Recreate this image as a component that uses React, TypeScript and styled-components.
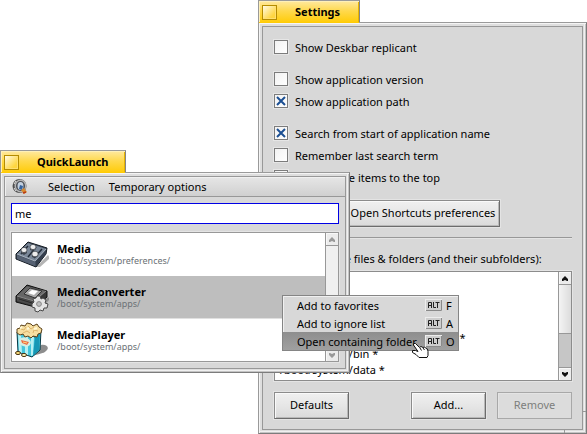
import React from "react";
import styled, { createGlobalStyle, css } from "styled-components";

const GlobalStyle = createGlobalStyle`
  * { box-sizing: border-box; }
  body { margin: 0; background: #fff; }
  body, button, input {
    font-family: "Noto Sans", "Open Sans", sans-serif;
    font-size: 11px;
    line-height: 16px;
    color: #000;
  }
  button { margin: 0; padding: 0; border: 0; background: none; }
`;

const Desktop = styled.main`
  position: relative;
  min-height: 100vh;
  overflow: hidden;
`;

/* ---------- windows ---------- */

const SettingsPlace = styled.div`
  position: absolute;
  top: 0;
  left: 258px;
  right: 0;
`;

const LauncherPlace = styled.div`
  position: absolute;
  top: 150px;
  left: 0;
  width: 350px;
`;

const Tab = styled.header<{ $width: number }>`
  display: flex;
  align-items: center;
  gap: 18px;
  width: ${(p) => p.$width}px;
  height: 23px;
  padding: 0 4px 0 3px;
  border: 1px solid #9a9a9a;
  border-bottom: 0;
  border-right-color: #858585;
  background: linear-gradient(#ffe9a0, #ffd94d 45%, #ffcb05);
  box-shadow: inset 1px 1px 0 #fff0b8, inset -1px 0 0 #e8b400;
`;

const CloseButton = styled.button`
  width: 15px;
  height: 15px;
  border: 1px solid #b58c00;
  background: linear-gradient(135deg, #fffbe8, #ffd640 75%);
  box-shadow: inset -1px -1px 0 #ffdf70;
`;

const Title = styled.h1`
  margin: 0;
  font-size: 11px;
  line-height: 16px;
  font-weight: 700;
`;

const Frame = styled.section`
  position: relative;
  margin-top: -1px;
  padding: 3px;
  border: 1px solid;
  border-color: #9a9a9a #7c7c7c #7c7c7c #9a9a9a;
  background: #dedede;
  box-shadow: inset 1px 1px 0 #f4f4f4, inset -1px -1px 0 #c4c4c4,
    inset -2px -2px 0 #f0f0f0;
`;

const TabSeam = styled.div<{ $width: number }>`
  position: absolute;
  top: -1px;
  left: 0;
  width: ${(p) => p.$width}px;
  height: 1px;
  background: #ffcb05;
`;

const Body = styled.div`
  border: 1px solid #989898;
  background: #d8d8d8;
`;

const ResizeMarks = styled.span`
  position: absolute;
  right: 0;
  bottom: 0;
  width: 22px;
  height: 22px;
  background:
    linear-gradient(#989898, #989898) right top / 3px 1px no-repeat,
    linear-gradient(#989898, #989898) left bottom / 1px 3px no-repeat;
`;

/* ---------- shared controls ---------- */

const PushButton = styled.button<{ $wide?: boolean }>`
  min-width: ${(p) => (p.$wide ? 154 : 75)}px;
  height: 27px;
  padding-bottom: 2px;
  border: 1px solid;
  border-color: #8c8c8c #6c6c6c #6c6c6c #8c8c8c;
  background: linear-gradient(#f0f0f0, #e6e6e6 50%, #dadada);
  box-shadow: 0 0 0 1px #e4e4e4, inset 1px 1px 0 #fafafa,
    inset -1px -1px 0 #b8b8b8;

  &:disabled {
    color: #7d7f7c;
    border-color: #a8a8a8;
    background: #dcdcdc;
    box-shadow: inset 1px 1px 0 #e4e4e4;
  }
`;

const BarTrack = styled.div`
  display: flex;
  flex-direction: column;
  flex: 0 0 13px;
  border-left: 1px solid #989898;
  background: #c6c6c6;
`;

const BarButton = styled.button`
  display: grid;
  place-items: center;
  flex: 0 0 12px;
  background: #ececec;
  box-shadow: inset 1px 1px 0 #f8f8f8;
`;

const BarThumb = styled.div<{ $full?: boolean }>`
  border: solid #989898;
  border-width: 1px 0;
  ${(p) =>
    p.$full
      ? css`
          flex: 1;
          background: #f0f0f0;
        `
      : css`
          height: 50px;
          background: linear-gradient(90deg, #f4f4f4, #dcdcdc);
        `}
`;

const BarSpace = styled.div`
  flex: 1;
  border-bottom: 1px solid #989898;
`;

function Arrow({ down, color }: { down?: boolean; color: string }) {
  return (
    <svg width="6" height="5" viewBox="0 0 6 5" aria-hidden="true">
      <path
        d={down ? "M0 0h1l2 1 2-1h1v2L3 5 0 2z" : "M0 5h1l2-1 2 1h1V3L3 0 0 3z"}
        fill={color}
      />
    </svg>
  );
}

function Scrollbar({ full }: { full?: boolean }) {
  const color = full ? "#999" : "#111";
  return (
    <BarTrack>
      <BarButton aria-label="Scroll up">
        <Arrow color={color} />
      </BarButton>
      <BarThumb $full={full} />
      {!full && <BarSpace />}
      <BarButton aria-label="Scroll down">
        <Arrow down color={color} />
      </BarButton>
    </BarTrack>
  );
}

/* ---------- settings ---------- */

const SettingsBody = styled(Body)`
  padding: 9px 10px 10px 11px;
`;

const OptionGroup = styled.div`
  display: flex;
  flex-direction: column;
  margin-bottom: 10px;
`;

const OptionLabel = styled.label`
  display: flex;
  align-items: center;
  gap: 7px;
  height: 22px;
  padding-top: 2px;
`;

const TickBox = styled.span`
  display: grid;
  place-items: center;
  width: 14px;
  height: 14px;
  margin-bottom: 3px;

  > * {
    grid-area: 1 / 1;
  }
`;

const TickInput = styled.input`
  appearance: none;
  width: 14px;
  height: 14px;
  margin: 0;
  border: 1px solid #7c7c7c;
  background: linear-gradient(135deg, #f2f2f2, #fff);
  box-shadow: 0 0 0 1px #e6e6e6;

  & + svg {
    visibility: hidden;
    pointer-events: none;
  }
  &:checked + svg {
    visibility: visible;
  }
`;

function Option({ text, checked }: { text: string; checked?: boolean }) {
  return (
    <OptionLabel>
      <TickBox>
        <TickInput type="checkbox" defaultChecked={checked} />
        <svg width="10" height="10" viewBox="0 0 10 10">
          <path d="M1 1l8 8M9 1L1 9" stroke="#1b4f93" strokeWidth="2" />
        </svg>
      </TickBox>
      {text}
    </OptionLabel>
  );
}

const Centered = styled.div`
  display: flex;
  justify-content: center;
  margin-top: 12px;
`;

const Divider = styled.hr`
  height: 2px;
  margin: 10px 0;
  border: 0;
  border-top: 1px solid #989898;
  border-bottom: 1px solid #e4e4e4;
`;

const ListLabel = styled.p`
  margin: 0;
  padding: 2px 0 4px;
  white-space: nowrap;
`;

const IgnoreBox = styled.div`
  display: flex;
  height: 110px;
  border: 1px solid #8c8c8c;
  background: #fff;
  box-shadow: 0 0 0 1px #e4e4e4;
`;

const IgnoreList = styled.ul`
  flex: 1;
  min-width: 0;
  margin: 0;
  padding: 10px 5px 0;
  list-style: none;
  white-space: nowrap;
  overflow: hidden;
`;

const ButtonRow = styled.footer`
  display: flex;
  gap: 11px;
  margin-top: 11px;

  > :first-child {
    margin-right: auto;
  }
`;

const ignored = [
  "/trash *",
  "/boot/home *",
  "/boot/beos *",
  "/boot/system/add-ons/Translators *",
  "/boot/system/bin *",
  "/boot/system/data *",
];

function SettingsWindow() {
  return (
    <SettingsPlace>
      <Tab $width={102}>
        <CloseButton aria-label="Close Settings" />
        <Title>Settings</Title>
      </Tab>
      <Frame>
        <TabSeam $width={100} />
        <SettingsBody>
          <OptionGroup>
            <Option text="Show Deskbar replicant" />
          </OptionGroup>
          <OptionGroup>
            <Option text="Show application version" />
            <Option text="Show application path" checked />
          </OptionGroup>
          <OptionGroup>
            <Option text="Search from start of application name" checked />
            <Option text="Remember last search term" />
            <Option text="Put favorite items to the top" />
          </OptionGroup>
          <Centered>
            <PushButton $wide>Open Shortcuts preferences</PushButton>
          </Centered>
          <Divider />
          <ListLabel>Don't list these files &amp; folders (and their subfolders):</ListLabel>
          <IgnoreBox>
            <IgnoreList>
              {ignored.map((path) => (
                <li key={path}>{path}</li>
              ))}
            </IgnoreList>
            <Scrollbar />
          </IgnoreBox>
          <ButtonRow>
            <PushButton>Defaults</PushButton>
            <PushButton>Add...</PushButton>
            <PushButton disabled>Remove</PushButton>
          </ButtonRow>
        </SettingsBody>
        <ResizeMarks />
      </Frame>
    </SettingsPlace>
  );
}

/* ---------- launcher ---------- */

const MenuBar = styled.nav`
  display: flex;
  align-items: center;
  gap: 14px;
  height: 20px;
  padding: 0 7px;
  border-bottom: 1px solid #989898;
  background: linear-gradient(#e6e6e6, #d0d0d0);
  box-shadow: inset 1px 1px 0 #f0f0f0;

  svg {
    display: block;
    margin-right: 5px;
  }
`;

const LauncherMain = styled.div`
  padding: 6px;
`;

const SearchInput = styled.input`
  display: block;
  width: 100%;
  height: 21px;
  padding: 0 3px;
  border: 1px solid #0000e5;
  border-radius: 0;
  outline: 0;
  background: #fff;
`;

const ResultBox = styled.div`
  display: flex;
  margin-top: 8px;
  border: 1px solid #989898;
  background: #fff;
  box-shadow: 0 0 0 1px #e4e4e4;
`;

const ResultList = styled.ul`
  flex: 1;
  margin: 0;
  padding: 0;
  list-style: none;
`;

const ResultRow = styled.li<{ $selected?: boolean }>`
  display: flex;
  align-items: center;
  gap: 8px;
  height: 43px;
  padding-left: 3px;
  border-bottom: 1px solid ${(p) => (p.$selected ? "#e0e0e0" : "#fff")};
  background: ${(p) => (p.$selected ? "#bebebe" : "#fff")};

  &:last-child {
    height: 42px;
    border-bottom: 0;
  }
`;

const ResultName = styled.div`
  font-weight: 700;
  line-height: 14px;
`;

const ResultPath = styled.div`
  font-size: 9px;
  line-height: 10px;
  color: #6c7276;
`;

function LogoIcon() {
  return (
    <svg width="17" height="17" viewBox="0 0 17 17" aria-hidden="true">
      <ellipse cx="7.500" cy="8" rx="7" ry="7" fill="#4f4f4f" />
      <ellipse cx="8.500" cy="8" rx="6" ry="6.500" fill="#b4b4b4" />
      <ellipse cx="8.500" cy="8" rx="4.500" ry="5" fill="#4a4e55" />
      <ellipse cx="8.500" cy="8" rx="3" ry="4" fill="#c3d0df" />
      <path d="M8 7l3 1-1 4-3-1z" fill="#35629c" />
      <path d="M2 6l2-3M2 10l2 3" stroke="#e4e4e4" />
      <path d="M9 12l3-2 3 4-3 2z" fill="#d98a2c" />
      <path d="M11 15l3-1" stroke="#b83a18" strokeWidth="1.4" />
    </svg>
  );
}

function MixerIcon() {
  return (
    <svg width="34" height="34" viewBox="0 0 34 34" aria-hidden="true">
      <path d="M21 30l12-12 2 3-10 9z" fill="#777" opacity=".55" />
      <path d="M1 17L13 5l19 6-1 6-10 13L1 22z" fill="#44505f" stroke="#111820" />
      <path d="M2 17L13 6l18 6-11 12z" fill="#7a8798" />
      <path d="M2 18l18 7v4L2 22z" fill="#566173" />
      <path d="M21 24l10-11v4L21 29z" fill="#343e4d" />
      <path d="M2 17l18 7 11-12" fill="none" stroke="#a8b2bf" />
      <path d="M6 17l7-8M13 20l8-10M19 21l8-9" stroke="#222c39" strokeWidth="1.5" />
      <path d="M6 14v2l3 2 3-2v-2zM15 11v2l3 1 3-2v-2zM17 18v2l3 1 3-2v-2z" fill="#3c434d" />
      <g fill="#eee" stroke="#353b44" strokeWidth=".7">
        <ellipse cx="9" cy="13" rx="3" ry="2.600" />
        <ellipse cx="18" cy="10" rx="3" ry="2.600" />
        <ellipse cx="20" cy="17" rx="3.200" ry="2.800" />
      </g>
    </svg>
  );
}

function ConverterIcon() {
  return (
    <svg width="34" height="34" viewBox="0 0 34 34" aria-hidden="true">
      <path d="M22 28l11-11 2 2-9 10z" fill="#777" opacity=".7" />
      <path d="M1 16L12 5l20 6v6L20 27 1 22z" fill="#383838" stroke="#111" />
      <path d="M2 16L12 6l19 5-11 10z" fill="#666" />
      <path d="M2 17l17 5v4L2 21z" fill="#4a4a4a" />
      <path d="M2 16l17 5 12-10" fill="none" stroke="#8b8b8b" />
      <path d="M9 14l6-6 12 3-7 7z" fill="#aaa" stroke="#333" />
      <path d="M13 13l4-3 6 1-4 4z" fill="#fff" />
      <path d="M4 19l13 4" stroke="#292929" />
      <path
        d="M22 16l3 0 1 3 2-1 3 2-1 3 3 1-1 4-3 0-1 3-3-1-2 2-3-1v-3l-3-1v-3l2-2-1-3 3-1z"
        fill="#e4e4e4"
        stroke="#4a4a4a"
      />
      <circle cx="24" cy="24" r="2.400" fill="#bebebe" stroke="#888" />
    </svg>
  );
}

function PopcornIcon() {
  return (
    <svg width="34" height="36" viewBox="0 0 34 36" aria-hidden="true">
      <path d="M18 34l8-11c6-1 9 3 5 6-3 3-6 2-13 5z" fill="#8d8d8d" />
      <path d="M2 10l18 5 6-7-1 20-8 7L3 30z" fill="#43c5dc" stroke="#073945" />
      <path d="M3 11l3 1 1 19-3-1zM10 13l3 1v19l-3-1zM16 14l3 1-1 18-2 1z" fill="#b4f0f3" />
      <path d="M20 15l5-6-1 19-6 6z" fill="#1598b6" />
      <ellipse cx="10" cy="20" rx="6" ry="4.500" fill="#d5eee3" transform="rotate(15 10 20)" />
      <path d="M6 18l4 1 4 1-2 3-5-2z" fill="#ed6b42" />
      <path d="M8 20l4 1" stroke="#ffd680" />
      <path
        d="M2 11V7l3-1 1-3 4 1 2-3 4 1 2 2 4-2 2 3 3 2-1 4-3 1-1 3-4-1-2 2-3-2-3 1-2-3-3 1z"
        fill="#f6dfa2"
        stroke="#5c421a"
      />
      <path d="M6 7l3 1 2-3M13 4l3 3 3-2M8 11l4-2 3 2M18 11l1-3 4 1" fill="none" stroke="#dcb46c" />
      <path d="M5 6l2-1M12 7l2-1M19 7l3-1" stroke="#fff9d8" strokeWidth="2" />
      <ellipse cx="3" cy="31" rx="2.500" ry="1.600" fill="#f0d477" stroke="#4b3614" />
      <ellipse cx="9" cy="33" rx="2.500" ry="1.600" fill="#f8ebb0" stroke="#4b3614" />
    </svg>
  );
}

const results = [
  { name: "Media", path: "/boot/system/preferences/", icon: <MixerIcon /> },
  { name: "MediaConverter", path: "/boot/system/apps/", icon: <ConverterIcon />, selected: true },
  { name: "MediaPlayer", path: "/boot/system/apps/", icon: <PopcornIcon /> },
];

function LauncherWindow() {
  return (
    <LauncherPlace>
      <Tab $width={126}>
        <CloseButton aria-label="Close QuickLaunch" />
        <Title>QuickLaunch</Title>
      </Tab>
      <Frame>
        <TabSeam $width={124} />
        <Body>
          <MenuBar>
            <LogoIcon />
            <button>Selection</button>
            <button>Temporary options</button>
          </MenuBar>
          <LauncherMain>
            <SearchInput aria-label="Search" defaultValue="me" />
            <ResultBox>
              <ResultList>
                {results.map((r) => (
                  <ResultRow key={r.name} $selected={r.selected}>
                    {r.icon}
                    <div>
                      <ResultName>{r.name}</ResultName>
                      <ResultPath>{r.path}</ResultPath>
                    </div>
                  </ResultRow>
                ))}
              </ResultList>
              <Scrollbar full />
            </ResultBox>
          </LauncherMain>
        </Body>
      </Frame>
    </LauncherPlace>
  );
}

/* ---------- context menu ---------- */

const ContextMenu = styled.div`
  position: absolute;
  top: 295px;
  left: 282px;
  width: 177px;
  border: 1px solid #858585;
  background: #d8d8d8;
  box-shadow: inset 1px 1px 0 #f0f0f0;
`;

const ContextItem = styled.button<{ $active?: boolean }>`
  display: flex;
  align-items: center;
  width: 100%;
  height: 18px;
  padding: 2px 0 0 14px;
  text-align: left;
  white-space: nowrap;
  background: ${(p) => (p.$active ? "linear-gradient(#8e8e8e, #a0a0a0)" : "none")};
`;

const ItemText = styled.span`
  flex: 1;
`;

const KeyCap = styled.svg`
  display: block;
  flex: none;
  margin-bottom: 2px;
`;

const KeyLetter = styled.span`
  flex: none;
  width: 12px;
  margin-left: 4px;
`;

const Pointer = styled.svg`
  position: absolute;
  top: 342px;
  left: 412px;
`;

function AltKey() {
  return (
    <KeyCap width="17" height="12" viewBox="0 0 17 12" role="img" aria-label="Alt">
      <rect width="17" height="12" fill="#ededed" />
      <path d="M1 11.500h15.500V1" fill="none" stroke="#8a8a8a" />
      <rect x="1" y="1" width="15" height="10" fill="#cecece" />
      <path
        d="M3.500 9V3.500h3V9M3.500 6.500h3M8.500 3v5.500H11M10.500 3.500h4M12.500 3.500V9"
        fill="none"
        stroke="#222"
      />
    </KeyCap>
  );
}

const actions = [
  { text: "Add to favorites", letter: "F" },
  { text: "Add to ignore list", letter: "A" },
  { text: "Open containing folder", letter: "O", active: true },
];

export default function App() {
  return (
    <Desktop>
      <GlobalStyle />
      <SettingsWindow />
      <LauncherWindow />
      <ContextMenu role="menu">
        {actions.map((a) => (
          <ContextItem key={a.text} role="menuitem" $active={a.active}>
            <ItemText>{a.text}</ItemText>
            <AltKey />
            <KeyLetter>{a.letter}</KeyLetter>
          </ContextItem>
        ))}
      </ContextMenu>
      <Pointer width="18" height="17" viewBox="0 0 18 17" aria-hidden="true">
        <path
          d="M1.500 1.500h2l4 4 1.500-1 2 1 1.500-.5 1.500 1.500 1.500.5.500 2.500v4l-1 2H7L4 12.500l-3.500-2v-2h3L6 9.500 1.500 3z"
          fill="#fff"
          stroke="#111"
        />
        <path d="M8 6l1.500 2.500M11 6l1.500 2" stroke="#111" />
      </Pointer>
    </Desktop>
  );
}
